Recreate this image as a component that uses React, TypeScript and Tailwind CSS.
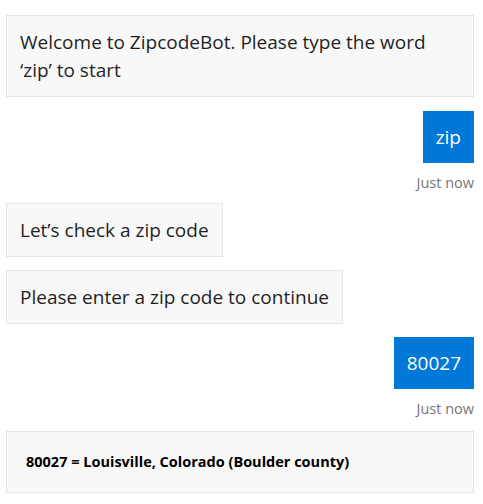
export default function App() {
  return (
    <div className="min-h-[504px] w-[483px] bg-white pl-[6px] pr-[9px] pt-[15px] font-['Open_Sans',sans-serif] text-[#1f1f1f]">
      <BotBubble wide>
        Welcome to ZipcodeBot. Please type the word ‘zip’ to start
      </BotBubble>

      <UserBubble text="zip" className="mt-[14px]" />

      <BotBubble className="mt-[10px]">Let’s check a zip code</BotBubble>
      <BotBubble className="mt-[13px]">Please enter a zip code to continue</BotBubble>

      <UserBubble text="80027" className="mt-[13px]" />

      <div className="mt-[12px] w-full border border-[#e6e6e6] bg-[#f8f8f8] px-[19px] py-[21px]">
        <p className="text-[14.5px] font-bold leading-[18px] text-black">80027 = Louisville, Colorado (Boulder county)</p>
      </div>
    </div>
  );
}

function BotBubble({ children, wide, className = "" }: { children: React.ReactNode; wide?: boolean; className?: string }) {
  return (
    <div className={`${wide ? "w-full" : "w-fit"} border border-[#e6e6e6] bg-[#f8f8f8] px-[13px] py-[12px] ${className}`}>
      <p className={`${wide ? "pr-6" : ""} text-[19px] leading-[28px]`}>{children}</p>
    </div>
  );
}

function UserBubble({ text, className = "" }: { text: string; className?: string }) {
  return (
    <div className={`flex flex-col items-end ${className}`}>
      <div className="bg-[#0078d7] px-[13px] py-[12px] text-[19px] leading-[28px] text-white">{text}</div>
      <p className="mt-[10px] text-[14.5px] leading-[20px] text-[#767676]">Just now</p>
    </div>
  );
}
